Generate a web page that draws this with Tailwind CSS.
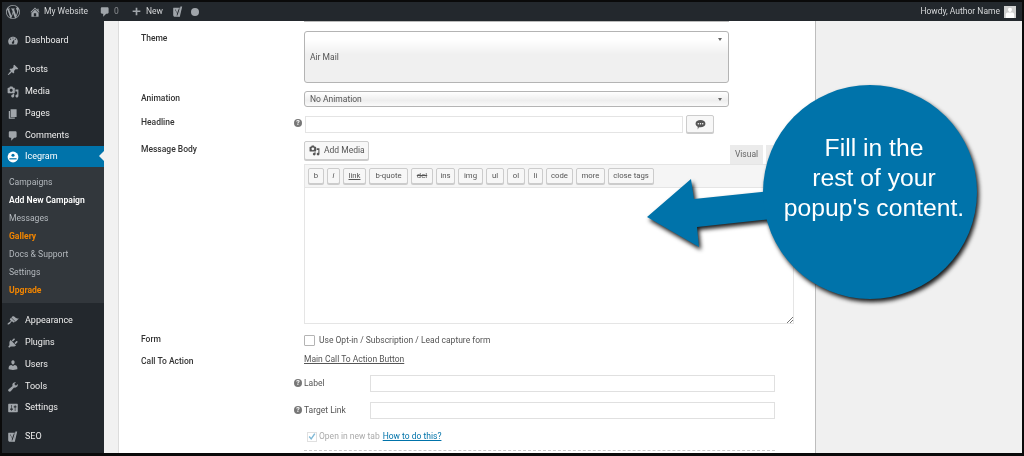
<!DOCTYPE html>
<html lang="en">
<head>
  <meta charset="UTF-8" />
  <title>Add New Campaign</title>
  <script src="https://cdn.jsdelivr.net/npm/@tailwindcss/browser@4"></script>
</head>
<body class="bg-black">
  <div class="relative w-[1024px] h-[456px] overflow-hidden border-2 border-b-[3px] border-[#0a0a0a] bg-[#f1f1f1] font-['Roboto',sans-serif] text-[8.500px] text-[#444] blur-[0.35px]">

    <!-- Admin bar -->
    <header class="h-[19px] bg-[#23282d] flex items-center text-[#d5d7d9] text-[8.500px] pl-[4px] pr-[6px]">
      <svg class="w-[14px] h-[14px] fill-[#a0a5aa] mr-[9px]" viewBox="0 0 20 20"><path d="M20 10c0-5.51-4.49-10-10-10C4.48 0 0 4.49 0 10c0 5.52 4.48 10 10 10 5.51 0 10-4.48 10-10zM7.78 15.37L4.37 6.22c.55-.02 1.17-.08 1.17-.08.5-.06.44-1.13-.06-1.11 0 0-1.45.11-2.37.11-.18 0-.37 0-.58-.01C4.12 2.69 6.87 1.11 10 1.11c2.33 0 4.45.87 6.05 2.34-.68-.11-1.65.39-1.65 1.58 0 .74.45 1.36.9 2.1.35.61.55 1.36.55 2.46 0 1.49-1.4 5-1.4 5l-3.03-8.37c.54-.02.82-.17.82-.17.5-.05.44-1.25-.06-1.22 0 0-1.44.12-2.38.12-.87 0-2.33-.12-2.33-.12-.5-.03-.56 1.2-.06 1.22l.92.08 1.26 3.41zM17.41 10c.24-.64.74-1.87.43-4.25.7 1.29 1.05 2.71 1.05 4.25 0 3.29-1.73 6.24-4.4 7.78.97-2.59 1.94-5.2 2.92-7.78zM6.1 18.09C3.12 16.65 1.11 13.53 1.11 10c0-1.3.23-2.48.72-3.59C3.25 10.3 4.67 14.2 6.1 18.09zm4.03-6.63l2.58 6.98c-.86.29-1.76.45-2.71.45-.79 0-1.57-.11-2.29-.33.81-2.38 1.62-4.74 2.42-7.1z"/></svg>
      <svg class="w-[12px] h-[12px] fill-[#a0a5aa] mr-[3px]" viewBox="0 0 20 20"><path d="M16 8.500l1.530 1.530-1.060 1.060L10 4.620l-6.470 6.470-1.060-1.060L10 2.500l4 4v-2h2v4zm-6-2.460l6 5.990V18H4v-5.970zM12 17v-5H8v5h4z"/></svg>
      <span class="w-[44px] mr-[11px] whitespace-nowrap">My Website</span>
      <svg class="w-[12px] h-[12px] fill-[#a0a5aa] mr-[3px]" viewBox="0 0 20 20"><path d="M5 2h9c1.100 0 2 .9 2 2v7c0 1.100-.9 2-2 2h-2l-5 5v-5H5c-1.100 0-2-.9-2-2V4c0-1.100.9-2 2-2z"/></svg>
      <span class="w-[5px] text-[#8d9094] mr-[12px]">0</span>
      <svg class="w-[11px] h-[11px] fill-[#a0a5aa] mr-[4px]" viewBox="0 0 20 20"><path d="M17 8v3h-5.500v6h-3v-6H3V8h5.500V3h3v5z"/></svg>
      <span class="w-[16px] mr-[10px]">New</span>
      <svg class="w-[12px] h-[12px] mr-[7px]" viewBox="0 0 20 20"><path class="fill-[#a0a5aa]" d="M3 3h11l-2 15H5c-2 0-3-1-3-3V5c0-1 0-2 1-2z"/><path class="fill-[#23282d]" d="M6 6l2.500 6 3-8 1.500 0-4 12-1.500 0 1-3-3.500-7z"/><path class="fill-[#a0a5aa]" d="M14 1l3 0-4 17-2 0z"/></svg>
      <span class="w-[8px] h-[8px] rounded-full bg-[#a0a5aa]"></span>
      <span class="ml-auto mr-[4px]">Howdy, Author Name</span>
      <span class="w-[12px] h-[12px] bg-[#d0d0d0] flex items-end justify-center overflow-hidden">
        <svg class="w-[12px] h-[12px] fill-white" viewBox="0 0 20 20"><path d="M10 10c-2.270 0-3.200-3.440-3.200-3.440C6.500 4.500 7.820 3 9.970 3c2.160 0 3.500 1.500 3.200 3.560 0 0-.9 3.440-3.170 3.440zM6 11h8c2 0 3 2 3 4v5H3v-5c0-2 1-4 3-4z"/></svg>
      </span>
    </header>

    <div class="flex h-[432px]">

      <!-- Sidebar -->
      <nav class="w-[102px] shrink-0 bg-[#23282d] text-[#eeeeee] text-[9px] pt-[9px]">
        <a class="flex items-center h-[22px] pl-[5px] mb-[7px]"><svg class="w-[12px] h-[12px] fill-[#a0a5aa] mr-[6px]" viewBox="0 0 20 20"><path d="M3.760 16h12.480c1.100-1.370 1.760-3.110 1.760-5 0-4.420-3.580-8-8-8s-8 3.580-8 8c0 1.890.66 3.630 1.760 5zM10 4c.55 0 1 .45 1 1s-.45 1-1 1-1-.45-1-1 .45-1 1-1zM6 6c.55 0 1 .45 1 1s-.45 1-1 1-1-.45-1-1 .45-1 1-1zm8 0c.55 0 1 .45 1 1s-.45 1-1 1-1-.45-1-1 .45-1 1-1zm-5.370 5.550L12 7v6c0 1.100-.9 2-2 2s-2-.9-2-2c0-.57.24-1.080.63-1.450z"/></svg>Dashboard</a>
        <a class="flex items-center h-[22px] pl-[5px]"><svg class="w-[12px] h-[12px] fill-[#a0a5aa] mr-[6px]" viewBox="0 0 20 20"><path d="M10.440 3.020l1.820-1.820 6.360 6.350-1.830 1.820c-1.050-.68-2.480-.57-3.410.36l-.75.75c-.92.93-1.040 2.350-.35 3.410l-1.830 1.820-2.410-2.410-2.800 2.790c-.42.42-3.380 2.710-3.800 2.290s1.860-3.390 2.280-3.810l2.790-2.790L4.100 9.360l1.830-1.820c1.050.69 2.480.57 3.400-.36l.75-.75c.93-.92 1.050-2.350.36-3.410z"/></svg>Posts</a>
        <a class="flex items-center h-[22px] pl-[5px]"><svg class="w-[12px] h-[12px] fill-[#a0a5aa] mr-[6px]" viewBox="0 0 20 20"><path d="M13 11V4c0-.55-.45-1-1-1h-1.670L9 1H5L3.670 3H2c-.55 0-1 .45-1 1v7c0 .55.45 1 1 1h10c.55 0 1-.45 1-1zM7 4.500c1.380 0 2.500 1.120 2.500 2.500S8.380 9.500 7 9.500 4.500 8.380 4.500 7 5.620 4.500 7 4.500zM14 6h5v10.500c0 1.380-1.120 2.500-2.500 2.500S14 17.880 14 16.500s1.120-2.500 2.500-2.500c.17 0 .34.02.5.05V9h-3V6zm-4 8.050V13h2v3.500c0 1.380-1.120 2.500-2.500 2.500S7 17.880 7 16.500 8.120 14 9.500 14c.17 0 .34.02.5.05z"/></svg>Media</a>
        <a class="flex items-center h-[22px] pl-[5px]"><svg class="w-[12px] h-[12px] fill-[#a0a5aa] mr-[6px]" viewBox="0 0 20 20"><path d="M6 15V2h10v13H6zm-1 1h8v2H3V5h2v11z"/></svg>Pages</a>
        <a class="flex items-center h-[21px] pl-[5px]"><svg class="w-[12px] h-[12px] fill-[#a0a5aa] mr-[6px]" viewBox="0 0 20 20"><path d="M5 2h9c1.100 0 2 .9 2 2v7c0 1.100-.9 2-2 2h-2l-5 5v-5H5c-1.100 0-2-.9-2-2V4c0-1.100.9-2 2-2z"/></svg>Comments</a>

        <!-- Current menu -->
        <a class="relative flex items-center h-[21px] pl-[5px] bg-[#0073aa] text-white">
          <svg class="w-[12px] h-[12px] mr-[6px]" viewBox="0 0 20 20"><circle class="fill-white" cx="10" cy="10" r="9"/><circle class="fill-[#0073aa]" cx="10" cy="7" r="2.600"/><path class="fill-[#0073aa]" d="M4 12h12v2H4z"/></svg>Icegram
          <span class="absolute right-0 top-[5px] border-y-[5px] border-r-[5px] border-y-transparent border-r-[#f1f1f1]"></span>
        </a>
        <div class="bg-[#32373c] text-[#b4b9be] text-[8.600px] pt-[6px] pb-[4px] pl-[7px] mb-[7px]">
          <a class="flex items-center h-[18px]">Campaigns</a>
          <a class="flex items-center h-[18px] text-white font-semibold">Add New Campaign</a>
          <a class="flex items-center h-[18px]">Messages</a>
          <a class="flex items-center h-[18px] text-[#f18500] font-bold">Gallery</a>
          <a class="flex items-center h-[18px]">Docs &amp; Support</a>
          <a class="flex items-center h-[18px]">Settings</a>
          <a class="flex items-center h-[18px] text-[#f18500] font-bold">Upgrade</a>
        </div>

        <a class="flex items-center h-[22px] pl-[5px]"><svg class="w-[12px] h-[12px] fill-[#a0a5aa] mr-[6px]" viewBox="0 0 20 20"><path d="M14.480 11.060L7.410 3.990l1.500-1.500c.5-.56 2.300-.47 3.510.32 1.210.8 1.430 1.280 2.910 2.100 1.180.64 2.450 1.260 4.450.85zm-.71.71L6.700 4.700 4.930 6.470c-.39.39-.39 1.020 0 1.410l1.060 1.060c.39.39.39 1.030 0 1.420-.6.6-1.430 1.110-2.210 1.690-.35.26-.7.53-1.010.84C1.430 13.230.5 15.150 1.150 15.800c.64.64 2.570-.28 3.890-1.610.31-.31.58-.66.84-1.010.58-.78 1.090-1.610 1.690-2.210.39-.39 1.020-.39 1.410 0l1.060 1.060c.39.39 1.020.39 1.410 0z"/></svg>Appearance</a>
        <a class="flex items-center h-[22px] pl-[5px]"><svg class="w-[12px] h-[12px] fill-[#a0a5aa] mr-[6px]" viewBox="0 0 20 20"><path d="M13.110 4.360L9.870 7.600 8 5.730l3.240-3.240c.35-.34 1.050-.2 1.560.32.52.51.66 1.210.31 1.550zm-8 1.770l.91-1.120 9.010 9.010-1.190.84c-.71.71-2.630 1.160-3.820 1.160H6.140L4.900 17.260c-.59.59-1.540.59-2.120 0-.59-.58-.59-1.530 0-2.120l1.240-1.240v-3.880c0-1.130.4-3.190 1.090-3.890zm7.260 3.970l3.240-3.240c.34-.35 1.040-.21 1.550.31.52.51.66 1.210.31 1.550l-3.240 3.250z"/></svg>Plugins</a>
        <a class="flex items-center h-[22px] pl-[5px]"><svg class="w-[12px] h-[12px] fill-[#a0a5aa] mr-[6px]" viewBox="0 0 20 20"><path d="M10 9.250c-2.270 0-2.730-3.440-2.730-3.440C7 4.020 7.820 2 9.970 2c2.160 0 2.980 2.020 2.710 3.810 0 0-.41 3.440-2.680 3.440zm0 2.570L12.720 10c2.390 0 4.520 2.330 4.520 4.530v2.490s-3.650 1.130-7.240 1.130c-3.650 0-7.240-1.130-7.240-1.130v-2.490c0-2.250 1.940-4.480 4.470-4.480z"/></svg>Users</a>
        <a class="flex items-center h-[21px] pl-[5px]"><svg class="w-[12px] h-[12px] fill-[#a0a5aa] mr-[6px]" viewBox="0 0 20 20"><path d="M16.680 9.770c-1.340 1.340-3.300 1.670-4.950.99l-5.410 6.520c-.99.99-2.590.99-3.580 0s-.99-2.590 0-3.570l6.520-5.420c-.68-1.650-.35-3.610.99-4.950 1.280-1.280 3.120-1.620 4.720-1.060l-2.890 2.890 2.820 2.820 2.860-2.870c.53 1.580.18 3.390-1.080 4.650z"/></svg>Tools</a>
        <a class="flex items-center h-[22px] pl-[5px] mb-[7px]"><svg class="w-[12px] h-[12px] fill-[#a0a5aa] mr-[6px]" viewBox="0 0 20 20"><path d="M18 16V4c0-.55-.45-1-1-1H3c-.55 0-1 .45-1 1v12c0 .55.45 1 1 1h14c.55 0 1-.45 1-1zM8 11h1c.55 0 1 .45 1 1s-.45 1-1 1H8v1.500c0 .28-.22.5-.5.5s-.5-.22-.5-.5V13H6c-.55 0-1-.45-1-1s.45-1 1-1h1V5.500c0-.28.22-.5.5-.5s.5.22.5.5V11zm5-2h-1c-.55 0-1-.45-1-1s.45-1 1-1h1V5.500c0-.28.22-.5.5-.5s.5.22.5.5V7h1c.55 0 1 .45 1 1s-.45 1-1 1h-1v5.500c0 .28-.22.5-.5.5s-.5-.22-.5-.5V9z"/></svg>Settings</a>
        <a class="flex items-center h-[22px] pl-[5px]"><svg class="w-[12px] h-[12px] mr-[6px]" viewBox="0 0 20 20"><path class="fill-[#a0a5aa]" d="M3 3h11l-2 15H5c-2 0-3-1-3-3V5c0-1 0-2 1-2z"/><path class="fill-[#23282d]" d="M6 6l2.500 6 3-8 1.500 0-4 12-1.500 0 1-3-3.500-7z"/><path class="fill-[#a0a5aa]" d="M14 1l3 0-4 17-2 0z"/></svg>SEO</a>
      </nav>

      <!-- Gutter -->
      <div class="w-[15px] shrink-0 border-r border-[#dcdcdc]"></div>

      <!-- Form panel -->
      <main class="w-[697px] shrink-0 bg-white border-r border-[#bdbdbd] pl-[22px] text-[#555]">
        <div class="ml-[163px] w-[425px] h-[1px] bg-[#bbb]"></div>
        <div class="grid grid-cols-[163px_1fr] mt-[2px] text-[8.500px]">

          <div class="pt-[8px] text-[#333] font-medium">Theme</div>
          <div class="relative h-[52px] mt-[7px] w-[425px] rounded-[3px] border border-[#b4b4b4] bg-[linear-gradient(#ffffff_0%,#ffffff_15%,#f0f0f0_45%,#f0f0f0_100%)] pl-[5px] flex items-center">
            Air Mail
            <span class="absolute right-[6px] top-[6px] border-x-[2.500px] border-t-[3px] border-x-transparent border-t-[#666]"></span>
          </div>

          <div class="pt-[9px] text-[#333] font-medium">Animation</div>
          <div class="relative h-[16px] mt-[8px] w-[425px] rounded-[3px] border border-[#b4b4b4] bg-[linear-gradient(#ffffff,#eeeeee_60%,#fafafa)] pl-[5px] pt-[1px] flex items-center">
            No Animation
            <span class="absolute right-[6px] top-[6px] border-x-[2.500px] border-t-[3px] border-x-transparent border-t-[#666]"></span>
          </div>

          <div class="relative pt-[9px] text-[#333] font-medium">Headline
            <span class="absolute right-[2px] top-[12px] w-[8px] h-[8px] rounded-full bg-[#777] text-white text-[7px] font-bold leading-[8px] text-center">?</span>
          </div>
          <div class="flex mt-[8px] h-[18px] items-start">
            <div class="ml-[1px] w-[378px] h-[17px] mt-[1px] border border-[#e4e4e4] bg-white"></div>
            <div class="ml-[3px] w-[28px] h-[18px] rounded-[2px] border border-[#ccc] bg-[#f7f7f7] shadow-[0_1px_0_#ccc] flex items-center justify-center">
              <svg class="w-[11px] h-[11px]" viewBox="0 0 20 20"><path class="fill-[#555]" d="M10 2c5 0 9 2.500 9 6.500S15 15 10 15l-3 0-2 4 0-5c-2-1-4-3-4-5.500C1 4.500 5 2 10 2z"/><circle class="fill-white" cx="6" cy="8.500" r="1.300"/><circle class="fill-white" cx="10" cy="8.500" r="1.300"/><circle class="fill-white" cx="14" cy="8.500" r="1.300"/></svg>
            </div>
          </div>

          <div class="pt-[10px] text-[#333] font-medium">Message Body</div>
          <div class="mt-[8px]">
            <div class="flex justify-between items-end w-[490px] h-[23px]">
              <div class="h-[19px] w-[65px] mb-[4px] rounded-[2px] border border-[#ccc] bg-[#f7f7f7] shadow-[0_1px_0_#ccc] flex items-center pl-[4px] gap-[4px]">
                <svg class="w-[11px] h-[11px] fill-[#555]" viewBox="0 0 20 20"><path d="M13 11V4c0-.55-.45-1-1-1h-1.670L9 1H5L3.670 3H2c-.55 0-1 .45-1 1v7c0 .55.45 1 1 1h10c.55 0 1-.45 1-1zM7 4.500c1.380 0 2.500 1.120 2.500 2.500S8.380 9.500 7 9.500 4.500 8.380 4.500 7 5.620 4.500 7 4.500zM14 6h5v10.500c0 1.380-1.120 2.500-2.500 2.500S14 17.880 14 16.500s1.120-2.500 2.500-2.500c.17 0 .34.02.5.05V9h-3V6zm-4 8.050V13h2v3.500c0 1.380-1.120 2.500-2.500 2.500S7 17.880 7 16.500 8.120 14 9.500 14c.17 0 .34.02.5.05z"/></svg>
                Add Media
              </div>
              <div class="flex">
                <div class="w-[33px] h-[19px] bg-[#ebebeb] flex items-center justify-center text-[#666]">Visual</div>
                <div class="w-[28px] h-[19px] ml-[3px] bg-[#ebebeb]"></div>
              </div>
            </div>
            <div class="w-[490px] h-[23px] bg-[#f5f5f5] border border-[#e5e5e5] border-b-0 flex items-center pl-[3px] gap-[3px] text-[7.750px] text-[#555]">
              <span class="h-[16px] w-[16px] rounded-[2px] border border-[#ccc] bg-[#f7f7f7] shadow-[0_1px_0_#ccc] flex items-center justify-center">b</span>
              <span class="h-[16px] w-[13px] rounded-[2px] border border-[#ccc] bg-[#f7f7f7] shadow-[0_1px_0_#ccc] flex items-center justify-center italic">i</span>
              <span class="h-[16px] w-[23px] rounded-[2px] border border-[#ccc] bg-[#f7f7f7] shadow-[0_1px_0_#ccc] flex items-center justify-center underline">link</span>
              <span class="h-[16px] w-[39px] rounded-[2px] border border-[#ccc] bg-[#f7f7f7] shadow-[0_1px_0_#ccc] flex items-center justify-center">b-quote</span>
              <span class="h-[16px] w-[22px] rounded-[2px] border border-[#ccc] bg-[#f7f7f7] shadow-[0_1px_0_#ccc] flex items-center justify-center line-through">del</span>
              <span class="h-[16px] w-[19px] rounded-[2px] border border-[#ccc] bg-[#f7f7f7] shadow-[0_1px_0_#ccc] flex items-center justify-center">ins</span>
              <span class="h-[16px] w-[25px] rounded-[2px] border border-[#ccc] bg-[#f7f7f7] shadow-[0_1px_0_#ccc] flex items-center justify-center">img</span>
              <span class="h-[16px] w-[18px] rounded-[2px] border border-[#ccc] bg-[#f7f7f7] shadow-[0_1px_0_#ccc] flex items-center justify-center">ul</span>
              <span class="h-[16px] w-[18px] rounded-[2px] border border-[#ccc] bg-[#f7f7f7] shadow-[0_1px_0_#ccc] flex items-center justify-center">ol</span>
              <span class="h-[16px] w-[15px] rounded-[2px] border border-[#ccc] bg-[#f7f7f7] shadow-[0_1px_0_#ccc] flex items-center justify-center">li</span>
              <span class="h-[16px] w-[27px] rounded-[2px] border border-[#ccc] bg-[#f7f7f7] shadow-[0_1px_0_#ccc] flex items-center justify-center">code</span>
              <span class="h-[16px] w-[29px] rounded-[2px] border border-[#ccc] bg-[#f7f7f7] shadow-[0_1px_0_#ccc] flex items-center justify-center">more</span>
              <span class="h-[16px] w-[46px] rounded-[2px] border border-[#ccc] bg-[#f7f7f7] shadow-[0_1px_0_#ccc] flex items-center justify-center">close tags</span>
            </div>
            <div class="relative w-[490px] h-[137px] border border-[#e5e5e5] bg-white">
              <svg class="absolute right-0 bottom-0 w-[6px] h-[6px] stroke-[#777]" viewBox="0 0 6 6"><path d="M0 6L6 0M3 6L6 3" /></svg>
            </div>
          </div>

          <div class="pt-[9px] text-[#333] font-medium">Form</div>
          <div class="flex items-center mt-[10px] h-[12px] gap-[4px]">
            <span class="w-[11px] h-[11px] border border-[#b4b4b4] rounded-[1px] bg-white"></span>
            Use Opt-in / Subscription / Lead capture form
          </div>

          <div class="pt-[9px] text-[#333] font-medium">Call To Action</div>
          <div class="mt-[7px] h-[12px] underline">Main Call To Action Button</div>
        </div>

        <div class="grid grid-cols-[76px_405px] ml-[153px] mt-[7px] text-[8.500px]">
          <div class="flex items-center gap-[2px] h-[17px]"><span class="w-[8px] h-[8px] rounded-full bg-[#777] text-white text-[7px] font-bold leading-[8px] text-center">?</span>Label</div>
          <div class="h-[17px] border border-[#e0e0e0] bg-white"></div>
          <div class="flex items-center gap-[2px] h-[17px] mt-[10px]"><span class="w-[8px] h-[8px] rounded-full bg-[#777] text-white text-[7px] font-bold leading-[8px] text-center">?</span>Target Link</div>
          <div class="h-[17px] mt-[10px] border border-[#e0e0e0] bg-white"></div>
        </div>

        <div class="flex items-center h-[12px] ml-[166px] mt-[12px] text-[8.500px]">
          <span class="w-[10px] h-[10px] border border-[#e0e0e0] flex items-center justify-center mr-[2px]">
            <svg class="w-[9px] h-[9px]" viewBox="0 0 10 10"><path class="stroke-[#7fb8d6] fill-none" stroke-width="1.800" d="M1.500 5L4 8l4.500-6.500"/></svg>
          </span>
          <span class="text-[#aaa]">Open in new tab</span>
          <a class="ml-[3px] text-[#0073aa] underline">How to do this?</a>
        </div>
        <div class="ml-[163px] mt-[7px] w-[471px] border-t border-dashed border-[#ccc]"></div>
      </main>

      <div class="flex-1 bg-[#f0f0f0]"></div>
    </div>

    <!-- Callout over the page -->
    <svg class="absolute left-[636px] top-[77px] w-[350px] h-[230px] drop-shadow-[2px_3px_2px_rgba(0,0,0,0.9)]" viewBox="638 79 350 230">
      <path class="fill-[#0073aa]" d="M647 217L691 179L694 199L790 189L790 217L697 227L699 247Z"/>
      <circle class="fill-[#0073aa]" cx="870" cy="192" r="107"/>
    </svg>
    <div class="absolute left-[761px] top-[131px] w-[222px] text-center font-['Liberation_Sans',sans-serif] text-[24.700px] leading-[30px] text-white">
      Fill in the<br />rest of your<br />popup's content.
    </div>
  </div>
</body>
</html>
